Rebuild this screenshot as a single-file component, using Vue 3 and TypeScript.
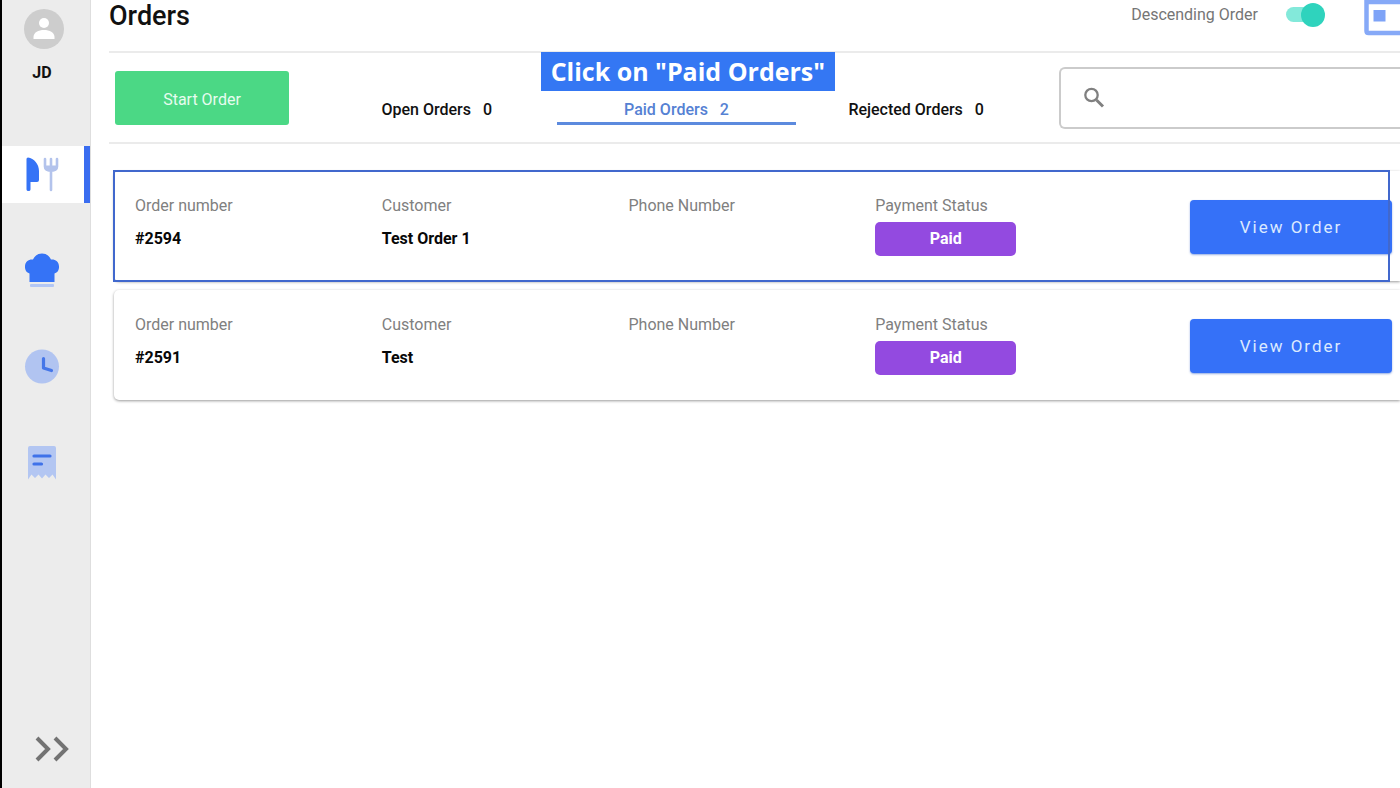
<script setup lang="ts">
import { ref } from 'vue'

interface Order {
  number: string
  customer: string
  phone: string
  status: string
  highlighted: boolean
}

interface Tab {
  id: string
  label: string
  count: number
  hint?: string
}

const tabs: Tab[] = [
  { id: 'open', label: 'Open Orders', count: 0 },
  { id: 'paid', label: 'Paid Orders', count: 2, hint: 'Click on "Paid Orders"' },
  { id: 'rejected', label: 'Rejected Orders', count: 0 },
]

const orders: Order[] = [
  { number: '#2594', customer: 'Test Order 1', phone: '', status: 'Paid', highlighted: true },
  { number: '#2591', customer: 'Test', phone: '', status: 'Paid', highlighted: false },
]

const activeTab = ref('paid')
const descending = ref(true)
const query = ref('')
</script>

<template>
  <div class="app">
    <aside class="sidebar">
      <div class="user">
        <svg class="avatar" viewBox="0 0 40 40" aria-hidden="true">
          <circle cx="20" cy="20" r="20" fill="#cdcdcd" />
          <circle cx="20" cy="14" r="5" fill="#fff" />
          <path d="M9.500 30v-2c0-4.500 5-7 10.500-7s10.500 2.500 10.500 7v2z" fill="#fff" />
        </svg>
        <span class="initials">JD</span>
      </div>
      <nav class="nav">
        <button class="nav-item active" type="button" aria-label="Orders">
          <svg viewBox="0 0 36 36">
            <path d="M2.500 2q0-1.500 1.500-1.500C10 1.500 15 7 15 14v9q0 2-2 2H6.500v7.500q0 1.500-2 1.500t-2-1.500z" fill="#3573f6" />
            <path d="M21 2v7.500q0 4 6 4t6-4V2M27 2v31" fill="none" stroke="#b3c3ec" stroke-width="2.600" stroke-linecap="round" />
            <path d="M21 8.500h12v2q0 4-6 4t-6-4z" fill="#b3c3ec" />
          </svg>
        </button>
        <button class="nav-item" type="button" aria-label="Kitchen">
          <svg viewBox="0 0 36 36">
            <path d="M5.500 29V20.500A7 7 0 0 1 1 13.500C1 8.500 5 6 9 6.500C11 2.500 14 .5 18 .5s7 2 9 6c4-.500 8 2 8 7a7 7 0 0 1-4.500 7V29z" fill="#3573f6" />
            <rect x="6" y="31" width="24" height="3" rx="1" fill="#b3c7f5" />
          </svg>
        </button>
        <button class="nav-item" type="button" aria-label="History">
          <svg viewBox="0 0 36 36">
            <circle cx="18" cy="17.500" r="17" fill="#b1c4f1" />
            <path d="M19.500 9.500v9.500l8 2.500" fill="none" stroke="#4576e8" stroke-width="3.200" stroke-linecap="round" stroke-linejoin="round" />
          </svg>
        </button>
        <button class="nav-item" type="button" aria-label="Receipts">
          <svg viewBox="0 0 36 36">
            <path d="M4 3q0-2 2-2h24q2 0 2 2v31.500l-3.500-5-3.500 3.500-3.500-3.500-3.500 4-3.500-4-3.500 3.500-3.500-3.500-3.500 5z" fill="#b3c6f2" />
            <path d="M10 11h16M10 19h7.500" fill="none" stroke="#3f72e9" stroke-width="3.200" stroke-linecap="round" />
          </svg>
        </button>
      </nav>
      <button class="expand" type="button" aria-label="Expand menu">
        <svg viewBox="0 0 34 26">
          <path d="M2 2l11 11L2 24M20 2l11 11-11 11" fill="none" stroke="#737373" stroke-width="4" />
        </svg>
      </button>
    </aside>

    <main class="main">
      <header class="header">
        <h1 class="title">Orders</h1>
        <div class="tools">
          <label class="sort">
            <span>Descending Order</span>
            <input v-model="descending" class="switch" type="checkbox" role="switch" />
          </label>
          <button class="panel" type="button" aria-label="Calendar">
            <svg viewBox="0 0 36 36">
              <path d="M40 2H2.500v29q0 2 2 2H40" fill="none" stroke="#86a9f7" stroke-width="4.500" />
              <rect x="9.500" y="10" width="12" height="11.500" fill="#7ea3f7" />
            </svg>
          </button>
        </div>
      </header>

      <div class="toolbar">
        <button class="start" type="button">Start Order</button>
        <div class="tabs" role="tablist">
          <div v-for="tab in tabs" :key="tab.id" class="tab-cell">
            <span v-if="tab.hint" class="hint">{{ tab.hint }}</span>
            <button
              class="tab"
              :class="{ selected: tab.id === activeTab }"
              type="button"
              role="tab"
              :aria-selected="tab.id === activeTab"
              @click="activeTab = tab.id"
            >
              <span>{{ tab.label }}</span>
              <span>{{ tab.count }}</span>
            </button>
          </div>
        </div>
        <label class="search">
          <svg viewBox="0 0 24 24" aria-hidden="true">
            <circle cx="8.500" cy="9" r="6.200" fill="none" stroke="#808080" stroke-width="2.300" />
            <path d="M13.500 14l6.500 6.500" stroke="#808080" stroke-width="3" />
          </svg>
          <input v-model="query" type="text" aria-label="Search orders" />
        </label>
      </div>

      <section class="orders">
        <article v-for="order in orders" :key="order.number" class="card" :class="{ highlighted: order.highlighted }">
          <dl class="fields">
            <div>
              <dt>Order number</dt>
              <dd>{{ order.number }}</dd>
            </div>
            <div>
              <dt>Customer</dt>
              <dd>{{ order.customer }}</dd>
            </div>
            <div>
              <dt>Phone Number</dt>
              <dd>{{ order.phone }}</dd>
            </div>
            <div>
              <dt>Payment Status</dt>
              <dd class="badge">{{ order.status }}</dd>
            </div>
          </dl>
          <button class="view" type="button">View Order</button>
        </article>
      </section>
    </main>
  </div>
</template>

<style>
body {
  margin: 0;
  background: #fff;
}
</style>

<style scoped>
.app {
  display: flex;
  min-height: 100vh;
  overflow: hidden;
  font-family: Roboto, "Liberation Sans", sans-serif;
  font-size: 16px;
  color: #111;
}

button,
input {
  font: inherit;
  border: 0;
  margin: 0;
  padding: 0;
  background: none;
}

button {
  cursor: pointer;
}

svg {
  display: block;
}

.sidebar {
  display: flex;
  flex-direction: column;
  flex: 0 0 91px;
  box-sizing: border-box;
  border-left: 2px solid #000;
  border-right: 1px solid #dedede;
  background: #ececec;
}

.user {
  display: flex;
  flex-direction: column;
  gap: 14px;
  padding: 9px 0 0 22px;
}

.avatar {
  width: 40px;
  height: 40px;
}

.initials {
  width: 36px;
  line-height: 20px;
  text-align: center;
  font-weight: 700;
}

.nav {
  display: flex;
  flex-direction: column;
  gap: 39px;
  margin-top: 63px;
}

.nav-item {
  display: flex;
  align-items: center;
  height: 57px;
  padding-left: 22px;
  border-right: 6px solid transparent;
}

.nav-item svg {
  width: 36px;
  height: 36px;
}

.nav-item.active {
  background: #fff;
  border-right-color: #3a6df0;
}

.expand {
  align-self: flex-start;
  margin: auto 0 26px 33px;
}

.expand svg {
  width: 34px;
  height: 26px;
}

.main {
  flex: 1;
  min-width: 0;
  padding-left: 18px;
}

.header {
  display: flex;
  justify-content: space-between;
  height: 51px;
  border-bottom: 2px solid #ebebeb;
}

.title {
  margin: 0;
  font-size: 27px;
  line-height: 32px;
  font-weight: 500;
}

.tools {
  display: flex;
  align-items: flex-start;
  gap: 39px;
}

.sort {
  display: flex;
  align-items: center;
  gap: 28px;
  height: 29px;
  color: #757575;
}

.switch {
  appearance: none;
  display: flex;
  align-items: center;
  width: 39px;
  height: 24px;
}

.switch::before {
  content: "";
  width: 24px;
  height: 24px;
  border-radius: 50%;
  background: #2fd3bd;
}

.switch::after {
  content: "";
  order: -1;
  width: 32px;
  height: 15px;
  margin-right: -32px;
  border-radius: 8px;
  background: #83e9da;
}

.switch:checked::before {
  margin-left: 15px;
}

.switch::before {
  position: relative;
  flex: none;
}

.switch::after {
  flex: none;
}

.panel svg {
  width: 36px;
  height: 36px;
}

.toolbar {
  display: flex;
  align-items: center;
  height: 89px;
  padding-left: 6px;
  border-bottom: 2px solid #ebebeb;
}

.start {
  flex: 0 0 174px;
  height: 54px;
  padding-top: 4px;
  border-radius: 3px;
  background: #4bd885;
  color: #e6fcef;
}

.tabs {
  display: grid;
  grid-template-columns: repeat(3, 1fr);
  flex: 1;
  align-self: stretch;
  margin: 0 23px 0 28px;
}

.tab-cell {
  position: relative;
  display: flex;
  align-items: flex-end;
  padding-bottom: 17px;
}

.tab {
  display: flex;
  justify-content: center;
  gap: 12px;
  width: 100%;
  border-bottom: 3px solid transparent;
  line-height: 24px;
  font-weight: 500;
  color: #111;
}

.tab.selected {
  border-bottom-color: #5c8ade;
  color: #5581d3;
}

.hint {
  position: absolute;
  top: -1px;
  left: -16px;
  padding: 0 10px;
  background: #3477f3;
  color: #fff;
  font-family: "Open Sans", "Noto Sans", sans-serif;
  font-size: 25px;
  line-height: 39px;
  font-weight: 700;
  white-space: nowrap;
}

.search {
  display: flex;
  align-items: center;
  gap: 16px;
  flex: 0 0 341px;
  box-sizing: border-box;
  height: 62px;
  padding-left: 22px;
  border: 2px solid #cbcbcb;
  border-right: 0;
  border-radius: 6px 0 0 6px;
}

.search svg {
  width: 24px;
  height: 24px;
}

.search input {
  flex: 1;
  min-width: 0;
  height: 40px;
  outline: 0;
}

.orders {
  display: flex;
  flex-direction: column;
  gap: 9px;
  padding: 27px 0 24px 5px;
}

.card {
  position: relative;
  display: flex;
  align-items: center;
  box-sizing: border-box;
  height: 110px;
  padding: 1px 8px 0 21px;
  border-radius: 5px 0 0 5px;
  background: #fff;
  box-shadow: 0 1px 3px rgba(0, 0, 0, 0.4);
}

.card.highlighted::after {
  content: "";
  position: absolute;
  inset: -1px 10px -1px -1px;
  border: 2px solid #4168cd;
  pointer-events: none;
}

.fields {
  display: grid;
  grid-template-columns: repeat(4, 1fr);
  flex: 1;
  margin: 0 68px 2px 0;
}

dt {
  line-height: 20px;
  color: #808080;
}

dd {
  margin: 6px 0 0;
  min-height: 34px;
  line-height: 34px;
  font-weight: 700;
  color: #080808;
}

.badge {
  width: 141px;
  border-radius: 5px;
  background: #934ae0;
  color: #fff;
  text-align: center;
}

.view {
  flex: 0 0 202px;
  height: 54px;
  border-radius: 4px;
  background: #3571f8;
  box-shadow: 0 1px 2px rgba(40, 90, 200, 0.5);
  color: #dce9ff;
  font-size: 17px;
  letter-spacing: 2px;
}
</style>
